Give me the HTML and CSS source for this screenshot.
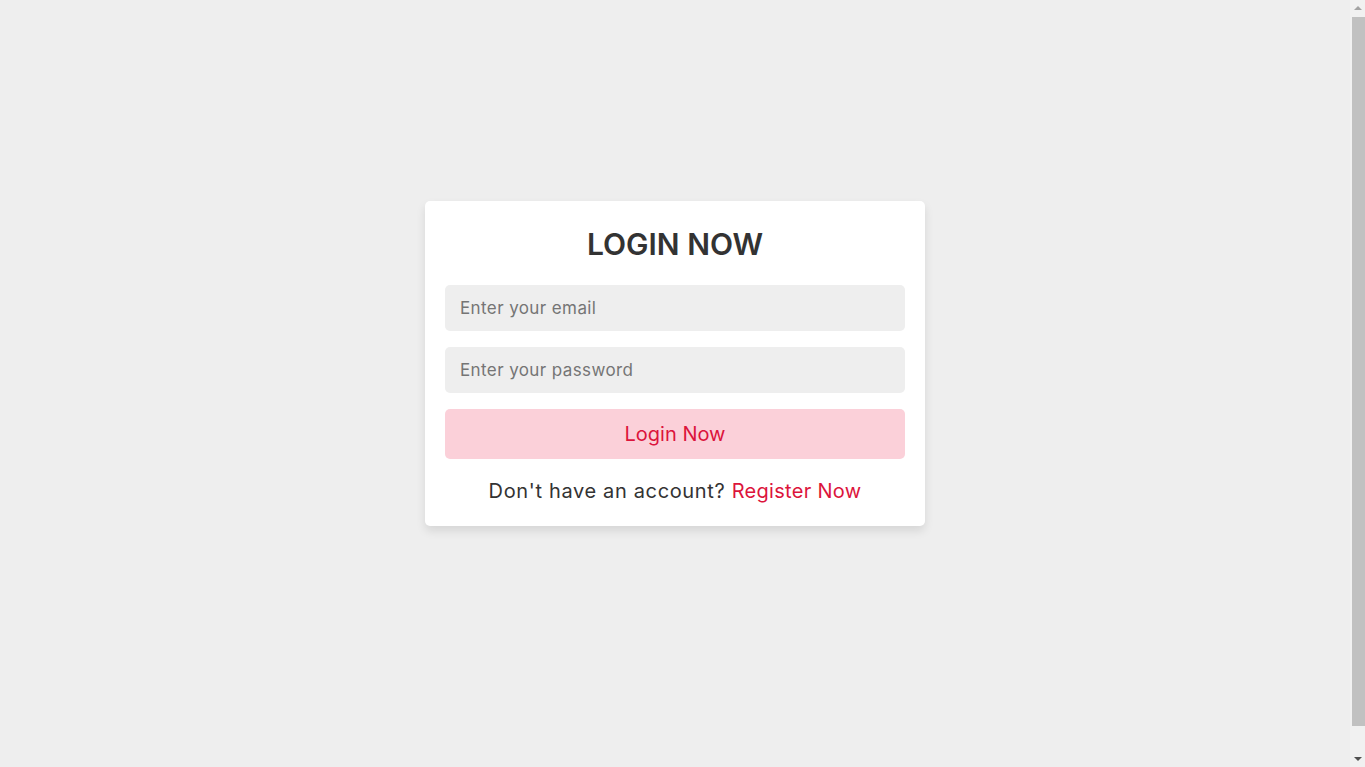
FILE: index.html
```html
<!DOCTYPE html>
<html lang="en">
<head>
<meta charset="utf-8">
<title>Login</title>
<link rel="stylesheet" href="styles.css">
</head>
<body>
<div class="form-container">
  <form class="login-form" action="#" method="post">
    <h3 class="title">Login Now</h3>
    <input class="field" type="email" name="email" placeholder="Enter your email">
    <input class="field" type="password" name="password" placeholder="Enter your password">
    <input class="field form-btn" type="submit" value="Login Now">
    <p class="note">Don't have an account? <a class="link" href="#">Register Now</a></p>
  </form>
</div>
<div class="scrollbar" aria-hidden="true">
  <span class="arrow arrow-up"></span>
  <span class="thumb"></span>
  <span class="arrow arrow-down"></span>
</div>
</body>
</html>
```

FILE: styles.css
```css
* {
  margin: 0;
  padding: 0;
  box-sizing: border-box;
  border: none;
  outline: none;
  text-decoration: none;
  font-family: Inter, "Liberation Sans", sans-serif;
}

html {
  overflow: hidden;
}

body {
  background: #eee;
  padding-right: 15px;
}

.form-container {
  min-height: 100vh;
  display: flex;
  align-items: center;
  justify-content: center;
  padding: 20px 20px 60px;
  background: #eee;
}

.login-form {
  width: 500px;
  padding: 20px;
  border-radius: 5px;
  box-shadow: 0 5px 10px rgba(0, 0, 0, 0.1);
  background: #fff;
  text-align: center;
  display: flex;
  flex-direction: column;
}

.title {
  font-size: 30px;
  line-height: 46px;
  font-weight: 600;
  text-transform: uppercase;
  margin-bottom: 10px;
  color: #333;
}

.field {
  display: block;
  width: 100%;
  padding: 10px 15px;
  font-size: 17px;
  line-height: 26px;
  margin: 8px 0;
  background: #eee;
  border-radius: 5px;
  color: #333;
  letter-spacing: 0.4px;
}

.field::placeholder {
  color: #757575;
}

.form-btn {
  background: #fbd0d9;
  color: crimson;
  font-size: 20px;
  line-height: 30px;
  letter-spacing: 0;
  cursor: pointer;
}

.note {
  margin-top: 10px;
  font-size: 20px;
  line-height: 29px;
  color: #333;
  letter-spacing: 0.65px;
}

.link {
  color: crimson;
  letter-spacing: 0.3px;
}

.scrollbar {
  position: fixed;
  top: 0;
  right: 0;
  width: 15px;
  height: 100vh;
  background: #f1f1f1;
  display: flex;
  flex-direction: column;
  align-items: center;
}

.arrow {
  width: 0;
  height: 0;
  border-left: 4px solid transparent;
  border-right: 4px solid transparent;
  margin: 6px 0;
}

.arrow-up {
  border-bottom: 4px solid #a3a3a3;
}

.arrow-down {
  border-top: 4px solid #505050;
  margin-top: auto;
}

.thumb {
  width: 13px;
  height: 709px;
  margin: 1px 0 0 1px;
  background: #c1c1c1;
  flex: none;
}
```
